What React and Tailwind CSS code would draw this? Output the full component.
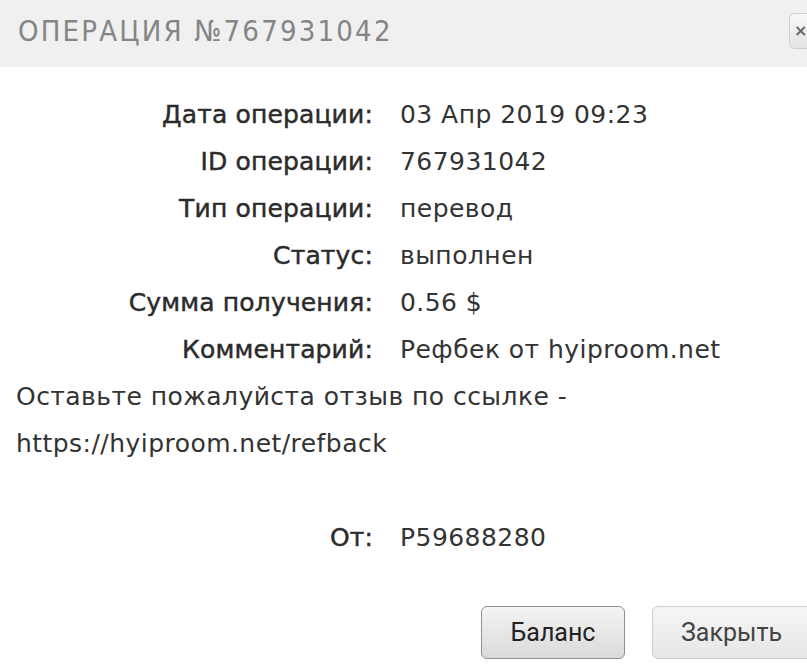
import React from "react";

const rows = [
  ["Дата операции:", "03 Апр 2019 09:23"],
  ["ID операции:", "767931042"],
  ["Тип операции:", "перевод"],
  ["Статус:", "выполнен"],
  ["Сумма получения:", "0.56 $"],
  ["Комментарий:", "Рефбек от hyiproom.net"],
];

function Row({ label, value }) {
  return (
    <div className="grid grid-cols-[373px_1fr] h-[47px] items-center">
      <div className="text-right tracking-[0.15px] text-[#2b2b2b] [-webkit-text-stroke:0.45px_#2b2b2b]">{label}</div>
      <div className="pl-[27px] text-[#333]">{value}</div>
    </div>
  );
}

export default function App() {
  return (
    <div className="w-[807px] h-[664px] overflow-hidden bg-white relative">
      <div className="h-[67px] bg-[#f0f0f0] flex items-center pl-[18px] relative">
        <span className="font-['DejaVu_Sans_Condensed',sans-serif] text-[29px] tracking-[2.2px] text-[#858585] leading-none pb-[4px]">
          ОПЕРАЦИЯ №767931042
        </span>
        <div className="absolute left-[789px] top-[13px] w-[32px] h-[36px] rounded-[6px] border border-[#cfcfcf] bg-gradient-to-b from-[#f8f8f8] to-[#e4e4e4] flex items-center pl-[4px]">
          <span className="font-['DejaVu_Sans',sans-serif] font-bold text-[16px] text-[#666] leading-none">×</span>
        </div>
      </div>
      <div className="pt-[24px] font-['DejaVu_Sans',sans-serif] text-[25px] tracking-[0.45px] leading-[47px] text-[#333]">
        {rows.map(([l, v]) => (
          <Row key={l} label={l} value={v} />
        ))}
        <div className="px-4">
          <div className="h-[47px]">Оставьте пожалуйста отзыв по ссылке -</div>
          <div className="h-[47px]">https://hyiproom.net/refback</div>
          <div className="h-[47px]"></div>
        </div>
        <Row label="От:" value="P59688280" />
      </div>
      <div className="flex gap-[27px] pl-[481px] mt-[45px] font-['Roboto',sans-serif] text-[25px]">
        <button className="shrink-0 w-[144px] h-[53px] rounded-[6px] border border-[#8f8f8f] bg-gradient-to-b from-[#f4f4f4] to-[#dadada] text-[#222] flex items-center justify-center">
          Баланс
        </button>
        <button className="shrink-0 w-[170px] h-[53px] rounded-[6px] border border-[#cdcdcd] bg-gradient-to-b from-[#f6f6f6] to-[#e6e6e6] text-[#444] flex items-center justify-start pl-[28px]">
          Закрыть
        </button>
      </div>
    </div>
  );
}
